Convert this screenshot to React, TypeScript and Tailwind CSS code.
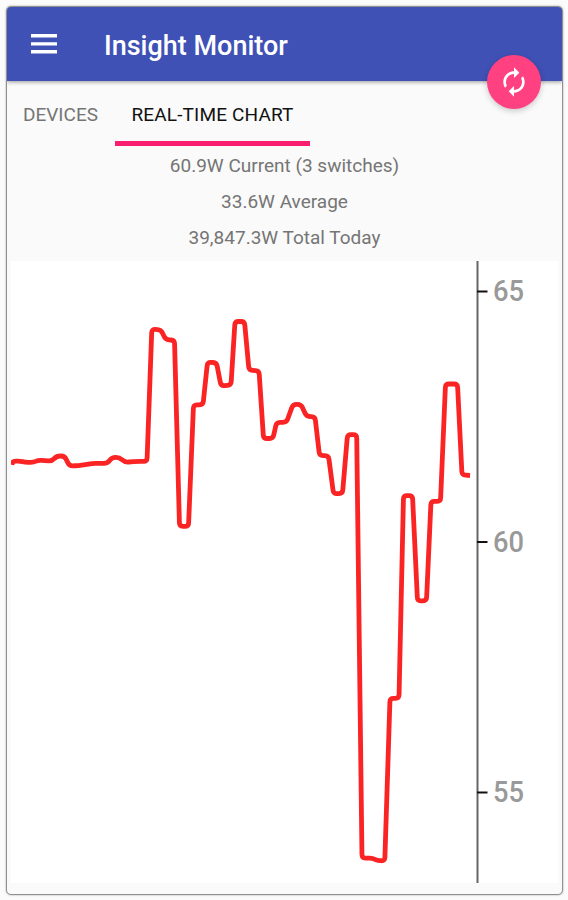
import { MdAutorenew } from "react-icons/md";

type Point = [number, number];

const readings: Point[] = [
  [12, 465], [12.5, 461.3], [20, 461], [25, 462.3], [34, 462.3], [38, 460.2], [52, 461], [56.7, 456], [64.5, 456],
  [69.5, 466], [78.5, 465.6], [92, 463.5], [107.5, 463.3], [112, 457.3], [119.5, 457.3], [125, 462.3],
  [137, 461.3], [147, 461.3], [151.8, 329.3], [161, 329.7], [165.5, 339.5], [174.5, 340.3], [179.5, 526.3],
  [188.5, 526.3], [193.5, 405], [203, 404.7], [207.5, 362.3], [216.5, 362.6], [221, 386], [231, 385],
  [235, 321.5], [244.5, 321.5], [249, 370.2], [259, 370.7], [263.5, 438.5], [273, 438.5], [276.5, 422.5],
  [286.5, 422.3], [293, 404.3], [301, 404.3], [306.5, 416.5], [315, 416.7], [319.5, 455.5], [328.5, 455.7],
  [333.5, 493.7], [342.5, 493.5], [347.5, 434.7], [356.7, 434.7], [362, 858], [373, 858.3], [376, 860.3],
  [384.8, 861], [390, 698.3], [399, 698.3], [403.5, 495.7], [412.5, 495.7], [417.5, 601], [426.5, 600.7],
  [431, 501.3], [440.5, 501.5], [445.5, 384], [457.5, 384], [462, 475], [470, 475.5],
];

const ticks = [
  { label: "65", y: 291.5 },
  { label: "60", y: 542 },
  { label: "55", y: 792.5 },
];

// line through the readings with the corners rounded off
function roundedPath(points: Point[], radius: number) {
  let d = `M${points[0][0]} ${points[0][1]}`;
  for (let i = 1; i < points.length - 1; i++) {
    const [x, y] = points[i];
    const toward = ([px, py]: Point) => {
      const length = Math.hypot(px - x, py - y);
      const t = Math.min(radius / length, 0.5);
      return `${x + (px - x) * t} ${y + (py - y) * t}`;
    };
    d += `L${toward(points[i - 1])}Q${x} ${y} ${toward(points[i + 1])}`;
  }
  const last = points[points.length - 1];
  return `${d}L${last[0]} ${last[1]}`;
}

function Chart() {
  return (
    <svg className="ml-1 block h-[622px] w-[547px] bg-white" viewBox="11 261 547 622">
      <path d={roundedPath(readings, 3.5)} fill="none" stroke="#fb2424" strokeWidth="4.8" strokeLinejoin="round" />
      <path d="M477.5 261V883" stroke="#666" strokeWidth="2" />
      {ticks.map((tick) => (
        <g key={tick.label}>
          <path d={`M477 ${tick.y}h10.5`} stroke="#111" strokeWidth="2" />
          <text x="493" y={tick.y + 9.5} fill="#999" className="font-['Roboto'] text-[29px] font-medium" textLength="31" lengthAdjust="spacingAndGlyphs">
            {tick.label}
          </text>
        </g>
      ))}
    </svg>
  );
}

export default function App() {
  return (
    <div className="h-[900px] w-[568px] bg-[#fbfbfb] pt-1.5 pl-1.5 font-['Roboto',sans-serif]">
      <div className="h-[889px] w-[557px] overflow-hidden rounded-[5px] border border-[#909090] bg-[#fafafa] shadow-[0_0_2px_#999]">
        <header className="relative flex h-[74px] items-center bg-[#3f51b5] text-white shadow-[0_1px_4px_rgba(0,0,0,0.4)]">
          <svg className="mb-px ml-6 h-5 w-[26px]" viewBox="0 0 26 20" fill="currentColor">
            <path d="M0 0h26v3.4H0zM0 8.2h26v3.4H0zM0 16h26v3.4H0z" />
          </svg>
          <h1 className="mt-[5px] ml-[47px] text-[27px] font-medium">Insight Monitor</h1>
          <button className="absolute top-[48px] right-[21px] flex size-[54px] items-center justify-center rounded-full bg-[#ff4081] shadow-[0_2px_6px_rgba(0,0,0,0.2)]">
            <MdAutorenew className="size-8" />
          </button>
        </header>
        <nav className="flex h-[65px] text-[19px]">
          <div className="w-[108px] pt-5 pl-4 text-[#757575]">DEVICES</div>
          <div className="w-[195px] border-b-[5px] border-[#f91e70] pt-5 text-center tracking-[0.16px] text-[#111]">REAL-TIME CHART</div>
        </nav>
        <div className="h-[115px] pt-[2px] text-center text-[19px] leading-[36px] text-[#757575]">
          <p>60.9W Current (3 switches)</p>
          <p>33.6W Average</p>
          <p>39,847.3W Total Today</p>
        </div>
        <Chart />
      </div>
    </div>
  );
}
